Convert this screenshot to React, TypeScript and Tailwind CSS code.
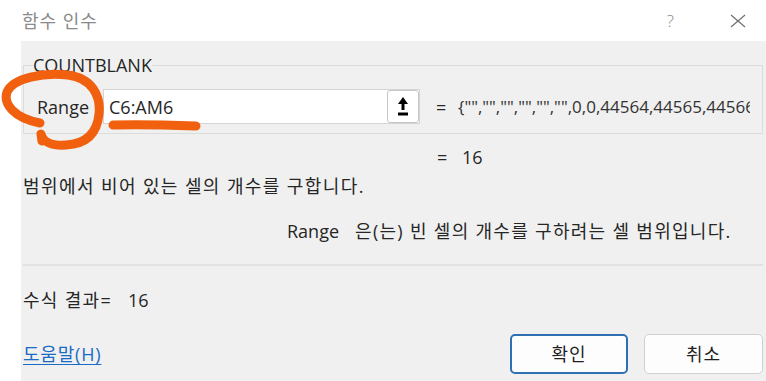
import React from "react";

const VALUE = '{"","","","","","",0,0,44564,44565,44566';

function UploadIcon() {
  return (
    <svg width="10" height="19" viewBox="0 0 10 19" className="block">
      <polygon points="5,0 10,7 0,7" fill="#000" />
      <rect x="3.5" y="6" width="3" height="7" fill="#000" />
      <rect x="0" y="15.5" width="10" height="3" fill="#000" />
    </svg>
  );
}

function Annotation() {
  return (
    <svg
      width="766"
      height="381"
      viewBox="0 0 766 381"
      className="pointer-events-none absolute inset-0"
      fill="none"
      stroke="#f0600f"
      strokeLinecap="round"
      strokeLinejoin="round"
    >
      <path
        d="M40 123 C 14 118, 3 104, 7 92 C 13 78, 44 72, 68 75 C 92 78, 101 96, 99 114 C 97 134, 86 144, 66 145 C 52 146, 43 142, 41 134 L 42 141"
        strokeWidth="9"
      />
      <path d="M113 125 C 140 124, 170 125, 196 126" strokeWidth="9" />
    </svg>
  );
}

export default function App() {
  return (
    <div className="relative flex h-[381px] w-[766px] flex-col overflow-hidden bg-white font-['Open_Sans','Noto_Sans_CJK_KR',sans-serif] text-[18px] text-[#262626]">
      <div className="flex h-[41px] shrink-0 items-center pl-[22px] pr-[20px]">
        <span className="flex-1 leading-[24px] tracking-[1px] text-[#8a8a8a]">함수 인수</span>
        <span className="mr-[56px] text-[17px] font-light text-[#8a8a8a]">?</span>
        <svg width="16" height="16" viewBox="0 0 16 16" stroke="#707070" strokeWidth="1.2">
          <line x1="1" y1="2" x2="15" y2="14" />
          <line x1="15" y1="2" x2="1" y2="14" />
        </svg>
      </div>

      <div className="ml-[21px] flex flex-1 flex-col bg-[#f0f0f0] pl-[2px] pr-[3px]">
        <div className="relative mt-[24px] h-[69px] border border-[#dcdcdc]">
          <span className="absolute -top-[13px] left-[9px] bg-[#f0f0f0] leading-[24px]">
            COUNTBLANK
          </span>
          <div className="flex items-center pl-[13px] pt-[23px]">
            <span className="w-[52px] leading-[24px]">Range</span>
            <div className="ml-[14px] flex h-[35px] w-[317px] items-center border border-[#d4d4d4] bg-white">
              <span className="flex-1 pl-[5px] leading-[24px]">C6:AM6</span>
              <div className="flex h-[33px] w-[32px] items-center justify-center rounded-[3px] border border-[#c6c6c6] bg-white">
                <UploadIcon />
              </div>
            </div>
            <span className="ml-[16px] w-[22px] leading-[24px]">=</span>
            <span className="mr-[12px] flex-1 overflow-hidden whitespace-nowrap text-[17px] leading-[24px] text-[#333]">
              {VALUE}
            </span>
          </div>
        </div>

        <div className="ml-[414px] mt-[11px] flex leading-[24px]">
          <span className="w-[25px]">=</span>
          <span>16</span>
        </div>

        <p className="mt-[5px] leading-[24px] tracking-[1.4px]">범위에서 비어 있는 셀의 개수를 구합니다.</p>

        <p className="mt-[21px] pl-[264px] leading-[24px]">
          <span className="mr-[16px]">Range</span>
          <span className="tracking-[1.3px]">은(는) 빈 셀의 개수를 구하려는 셀 범위입니다.</span>
        </p>

        <div className="mt-[21px] h-[2px] bg-[#e2e2e2]" />

        <p className="mt-[22px] leading-[24px]">
          <span className="tracking-[1.3px]">수식 결과=</span>
          <span className="ml-[16px]">16</span>
        </p>

        <div className="mt-[22px] flex h-[40px] items-center">
          <div className="flex-1">
            <a className="leading-[24px] tracking-[0.8px] text-[#1a6bc4] underline underline-offset-[3px]">
              도움말(H)
            </a>
          </div>
          <button className="h-[40px] w-[118px] rounded-[5px] border-2 border-[#2f6fb3] bg-[#fdfdfd] text-[18px] tracking-[1px] text-[#1f1f1f]">
            확인
          </button>
          <button className="ml-[16px] h-[40px] w-[119px] rounded-[5px] border border-[#d0d0d0] bg-[#fdfdfd] text-[18px] tracking-[1px] text-[#1f1f1f]">
            취소
          </button>
        </div>
      </div>

      <Annotation />
    </div>
  );
}
